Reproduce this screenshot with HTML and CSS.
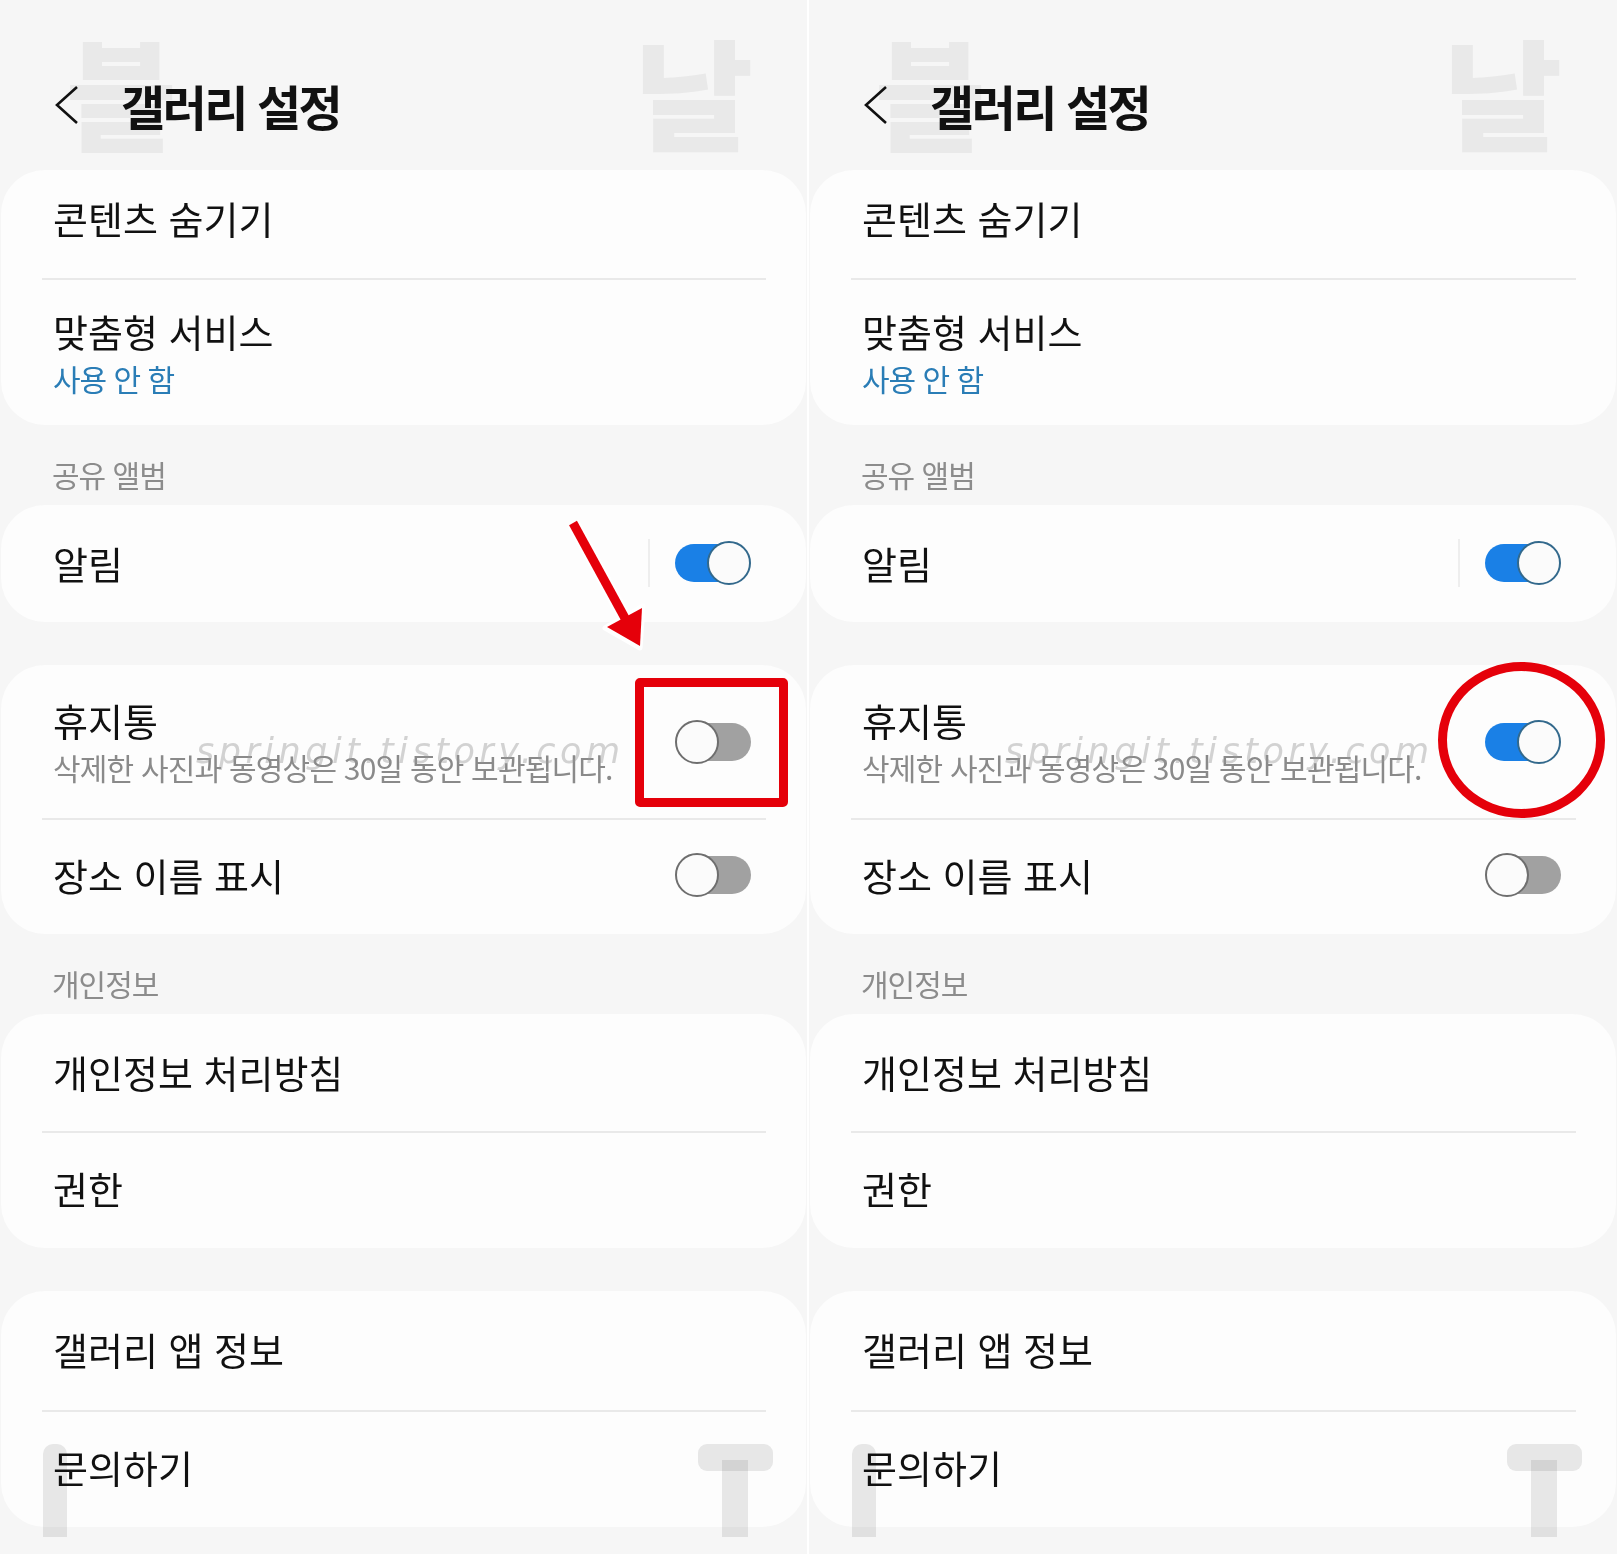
FILE: index.html
```html
<!DOCTYPE html>
<html lang="ko">
<head>
<meta charset="utf-8">
<title>갤러리 설정</title>
<link rel="stylesheet" href="styles.css">
</head>
<body>
<div class="screen">
  <section class="panel">
    <div class="wm wm-beul">블</div>
    <div class="wm wm-nal">날</div>
    <header class="appbar">
      <svg class="back" width="24" height="40" viewBox="0 0 24 40"><polyline points="22,2 2,20 22,38" fill="none" stroke="#111" stroke-width="2.6" stroke-linejoin="miter"/></svg>
      <h1 class="title">갤러리 설정</h1>
    </header>
    <div class="card">
      <div class="row compact"><span class="label">콘텐츠 숨기기</span></div>
      <div class="divider"></div>
      <div class="row two"><div class="texts"><div class="label">맞춤형 서비스</div><div class="sub blue">사용 안 함</div></div></div>
    </div>
    <div class="section">공유 앨범</div>
    <div class="card">
      <div class="row"><span class="label">알림</span><span class="vsep"></span><span class="toggle on"><span class="track"></span><span class="thumb"></span></span></div>
    </div>
    <div class="card gap">
      <div class="row two tall"><div class="texts"><div class="label">휴지통</div><div class="sub">삭제한 사진과 동영상은 30일 동안 보관됩니다.</div></div><span class="toggle off"><span class="track"></span><span class="thumb"></span></span></div>
      <div class="divider"></div>
      <div class="row"><span class="label">장소 이름 표시</span><span class="toggle off"><span class="track"></span><span class="thumb"></span></span></div>
    </div>
    <div class="section">개인정보</div>
    <div class="card">
      <div class="row"><span class="label">개인정보 처리방침</span></div>
      <div class="divider"></div>
      <div class="row last"><span class="label">권한</span></div>
    </div>
    <div class="card gap">
      <div class="row first"><span class="label">갤러리 앱 정보</span></div>
      <div class="divider"></div>
      <div class="row last"><span class="label">문의하기</span></div>
    </div>
    <div class="stamp">springit.tistory.com</div>
    <div class="wm-bar"></div>
    <div class="wm-t-top"></div>
    <div class="wm-t-stem"></div>
    <svg class="arrow" width="807" height="700" viewBox="0 0 807 700">
      <g stroke="#fff" stroke-width="5" stroke-linejoin="round" fill="#fff">
        <line x1="573" y1="523" x2="626" y2="620" stroke-width="14"/>
        <polygon points="640,648 605,628 643,606"/>
      </g>
      <line x1="573" y1="523" x2="626" y2="620" stroke="#e5000a" stroke-width="9"/>
      <polygon points="640,646 607,627 642,608" fill="#e5000a"/>
    </svg>
    <div class="mark-box"></div>
  </section>

  <section class="panel">
    <div class="wm wm-beul">블</div>
    <div class="wm wm-nal">날</div>
    <header class="appbar">
      <svg class="back" width="24" height="40" viewBox="0 0 24 40"><polyline points="22,2 2,20 22,38" fill="none" stroke="#111" stroke-width="2.6" stroke-linejoin="miter"/></svg>
      <h1 class="title">갤러리 설정</h1>
    </header>
    <div class="card">
      <div class="row compact"><span class="label">콘텐츠 숨기기</span></div>
      <div class="divider"></div>
      <div class="row two"><div class="texts"><div class="label">맞춤형 서비스</div><div class="sub blue">사용 안 함</div></div></div>
    </div>
    <div class="section">공유 앨범</div>
    <div class="card">
      <div class="row"><span class="label">알림</span><span class="vsep"></span><span class="toggle on"><span class="track"></span><span class="thumb"></span></span></div>
    </div>
    <div class="card gap">
      <div class="row two tall"><div class="texts"><div class="label">휴지통</div><div class="sub">삭제한 사진과 동영상은 30일 동안 보관됩니다.</div></div><span class="toggle on"><span class="track"></span><span class="thumb"></span></span></div>
      <div class="divider"></div>
      <div class="row"><span class="label">장소 이름 표시</span><span class="toggle off"><span class="track"></span><span class="thumb"></span></span></div>
    </div>
    <div class="section">개인정보</div>
    <div class="card">
      <div class="row"><span class="label">개인정보 처리방침</span></div>
      <div class="divider"></div>
      <div class="row last"><span class="label">권한</span></div>
    </div>
    <div class="card gap">
      <div class="row first"><span class="label">갤러리 앱 정보</span></div>
      <div class="divider"></div>
      <div class="row last"><span class="label">문의하기</span></div>
    </div>
    <div class="stamp">springit.tistory.com</div>
    <div class="wm-bar"></div>
    <div class="wm-t-top"></div>
    <div class="wm-t-stem"></div>
    <div class="mark-ring"></div>
  </section>
</div>
</body>
</html>
```

FILE: styles.css
```css
html, body {
  margin: 0;
  padding: 0;
  background: #ffffff;
}
body {
  font-family: "Noto Sans CJK KR", "Noto Sans", sans-serif;
  color: #111111;
}
.screen {
  display: flex;
  gap: 2px;
  width: 1617px;
  height: 1554px;
  overflow: hidden;
}
.panel {
  position: relative;
  flex: none;
  width: 807px;
  height: 1554px;
  background: #f6f6f6;
  display: flex;
  flex-direction: column;
  overflow: hidden;
}
.panel + .panel {
  width: 808px;
}

/* App bar */
.appbar {
  position: relative;
  z-index: 2;
  height: 170px;
  box-sizing: border-box;
  padding: 39px 0 0 55px;
  display: flex;
  align-items: center;
  flex: none;
}
.back {
  display: block;
  flex: none;
}
.title {
  margin: 0 0 0 42px;
  font-size: 48px;
  line-height: 56px;
  font-weight: 700;
  letter-spacing: -2.5px;
  color: #111;
}

/* Cards */
.card {
  position: relative;
  z-index: 1;
  margin: 0 1px;
  background: #fdfdfd;
  border-radius: 44px;
  flex: none;
}
.card.gap {
  margin-top: 43px;
}
.row {
  display: flex;
  align-items: center;
  padding: 34px 55px 35px 52px;
}
.divider + .row {
  padding-top: 31px;
}
.row.compact {
  padding-top: 24px;
  padding-bottom: 36px;
}
.row.first {
  padding-bottom: 37px;
}
.divider + .row.last {
  padding-bottom: 36px;
}
.row.two {
  padding-top: 27px;
  padding-bottom: 27px;
}
.row.two.tall {
  padding-top: 31px;
  padding-bottom: 31px;
}
.texts {
  flex: 1;
}
.label {
  flex: 1;
  font-size: 38px;
  line-height: 48px;
  letter-spacing: 0;
  color: #111;
}
.sub {
  margin-top: 3px;
  font-size: 30px;
  line-height: 40px;
  letter-spacing: -0.8px;
  color: #8a8a8a;
}
.sub.blue {
  color: #2a7db6;
  letter-spacing: -1px;
}
.divider {
  height: 2px;
  background: #e9e9e9;
  margin: 0 40px 0 41px;
}
.vsep {
  width: 2px;
  height: 48px;
  background: #eeeeee;
  margin-right: 25px;
  flex: none;
}

/* Section headers */
.section {
  flex: none;
  margin: 29px 0 11px;
  padding-left: 52px;
  font-size: 30px;
  line-height: 40px;
  letter-spacing: -1px;
  color: #8c8c8c;
}

/* Toggles */
.toggle {
  position: relative;
  flex: none;
  width: 76px;
  height: 44px;
}
.toggle .track {
  position: absolute;
  top: 3px;
  width: 72px;
  height: 38px;
  border-radius: 19px;
}
.toggle .thumb {
  position: absolute;
  top: 0;
  width: 44px;
  height: 44px;
  box-sizing: border-box;
  border-radius: 50%;
  background: #fbfbfb;
}
.toggle.on .track {
  left: 0;
  background: #1a80e6;
}
.toggle.on .thumb {
  right: 0;
  border: 2.5px solid #33698c;
}
.toggle.off .track {
  right: 0;
  background: #a1a1a1;
}
.toggle.off .thumb {
  left: 0;
  border: 2.5px solid #6e6e6e;
}

/* Watermarks */
.wm {
  position: absolute;
  z-index: 1;
  top: 20px;
  font-size: 120px;
  line-height: 140px;
  font-weight: 900;
  color: #e9e9e9;
}
.wm-beul {
  left: 66px;
}
.wm-nal {
  left: 634px;
  transform: scaleX(1.08);
  transform-origin: left center;
}
.stamp {
  position: absolute;
  z-index: 3;
  left: 196px;
  top: 729px;
  font-family: "DejaVu Sans", sans-serif;
  font-style: italic;
  font-weight: 200;
  font-size: 35px;
  line-height: 44px;
  letter-spacing: 4.5px;
  color: rgba(150, 150, 150, 0.42);
}
.wm-bar, .wm-t-top, .wm-t-stem {
  position: absolute;
  z-index: 3;
  background: #e9e9e9;
  mix-blend-mode: multiply;
}
.wm-bar {
  left: 43px;
  top: 1444px;
  width: 24px;
  height: 93px;
  border-radius: 10px 10px 0 0;
}
.wm-t-top {
  left: 698px;
  top: 1444px;
  width: 75px;
  height: 27px;
  border-radius: 9px;
}
.wm-t-stem {
  left: 722px;
  top: 1460px;
  width: 26px;
  height: 77px;
}

/* Annotations */
.arrow {
  position: absolute;
  z-index: 4;
  left: 0;
  top: 0;
}
.mark-box {
  position: absolute;
  z-index: 4;
  left: 635px;
  top: 678px;
  width: 153px;
  height: 129px;
  box-sizing: border-box;
  border: 9px solid #e5000a;
  border-radius: 5px;
}
.mark-ring {
  position: absolute;
  z-index: 4;
  left: 629px;
  top: 662px;
  width: 167px;
  height: 156px;
  box-sizing: border-box;
  border: 9px solid #e5000a;
  border-radius: 50%;
}
```
